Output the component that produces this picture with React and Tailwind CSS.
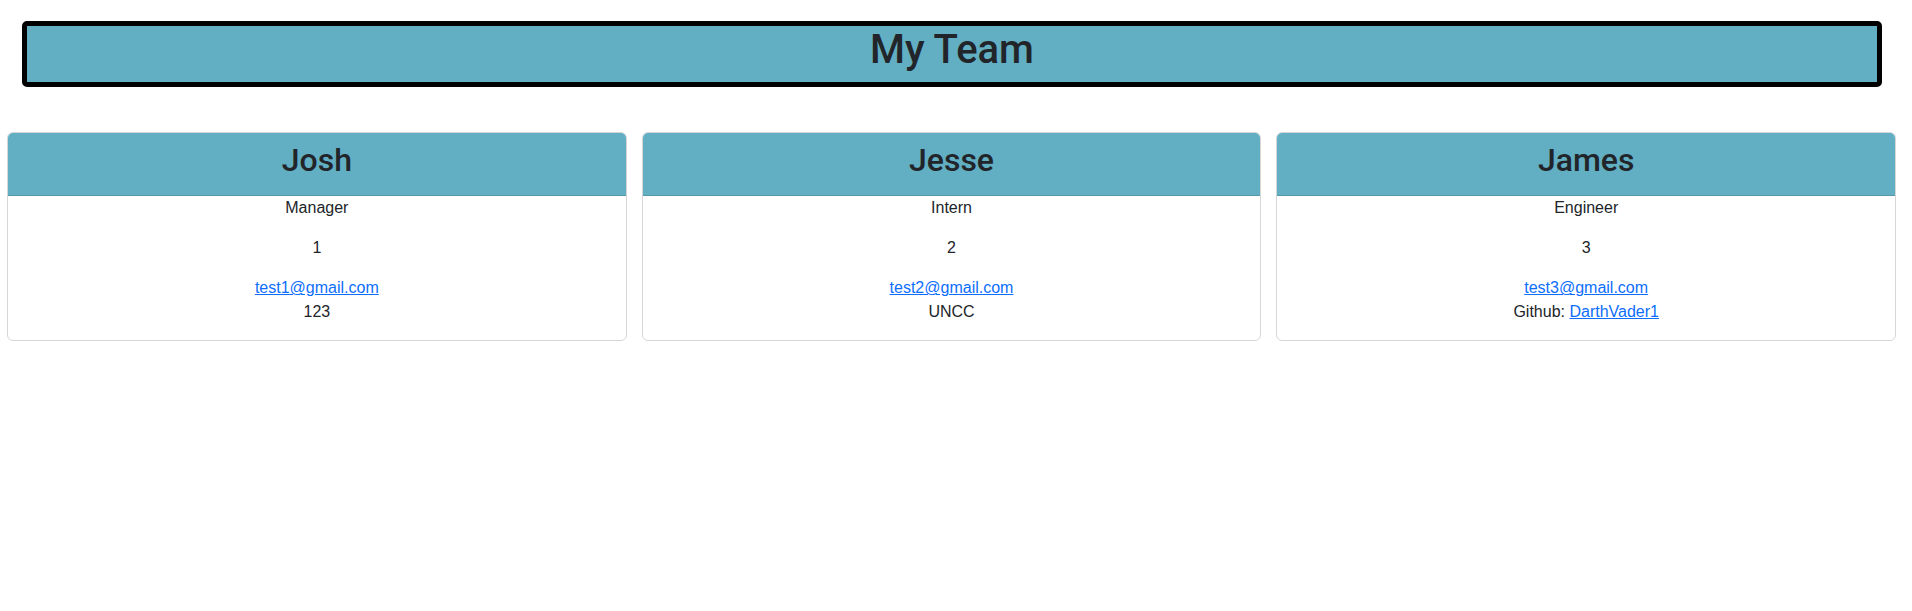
import React from "react";

const employees = [
  { name: "Josh", role: "Manager", id: "1", email: "test1@gmail.com", extra: <>123</> },
  { name: "Jesse", role: "Intern", id: "2", email: "test2@gmail.com", extra: <>UNCC</> },
  {
    name: "James",
    role: "Engineer",
    id: "3",
    email: "test3@gmail.com",
    extra: (
      <>
        Github:{" "}
        <a href="#" className="text-[#0d6efd] underline">
          DarthVader1
        </a>
      </>
    ),
  },
];

const headingFont = { fontFamily: 'Roboto, "Liberation Sans", Arial, sans-serif' };

function Card({ e }) {
  return (
    <div className="flex-1 min-w-0 border border-[#d6d6d6] rounded-[6px] bg-white text-center">
      <div className="bg-[#62aec3] border-b border-[#5697a9] rounded-t-[5px] px-4 pt-[8px] pb-[16px]">
        <h2 className="text-[32px] leading-[38.4px] font-medium text-[#212529]" style={headingFont}>
          {e.name}
        </h2>
      </div>
      <div className="pb-[16px] text-[16px] leading-[24px] text-[#212529]">
        <p className="mb-[16px]">{e.role}</p>
        <p className="mb-[16px]">{e.id}</p>
        <div>
          <a href="#" className="text-[#0d6efd] underline">
            {e.email}
          </a>
          <br />
          {e.extra}
        </div>
      </div>
    </div>
  );
}

export default function App() {
  return (
    <div
      className="min-h-[611px] bg-white text-[#212529]"
      style={{ fontFamily: '"Liberation Sans", Arial, sans-serif' }}
    >
      <div className="pt-[21px] pl-[22px] pr-[30px]">
        <div className="border-[5px] border-black rounded-[5px] bg-[#62aec3] text-center pb-[8px]">
          <h1 className="text-[40px] leading-[48px] font-medium text-[#212529]" style={headingFont}>
            My Team
          </h1>
        </div>
      </div>
      <div className="flex gap-[15px] pl-[7px] pr-[16px] mt-[45px]">
        {employees.map((e) => (
          <Card key={e.name} e={e} />
        ))}
      </div>
    </div>
  );
}
